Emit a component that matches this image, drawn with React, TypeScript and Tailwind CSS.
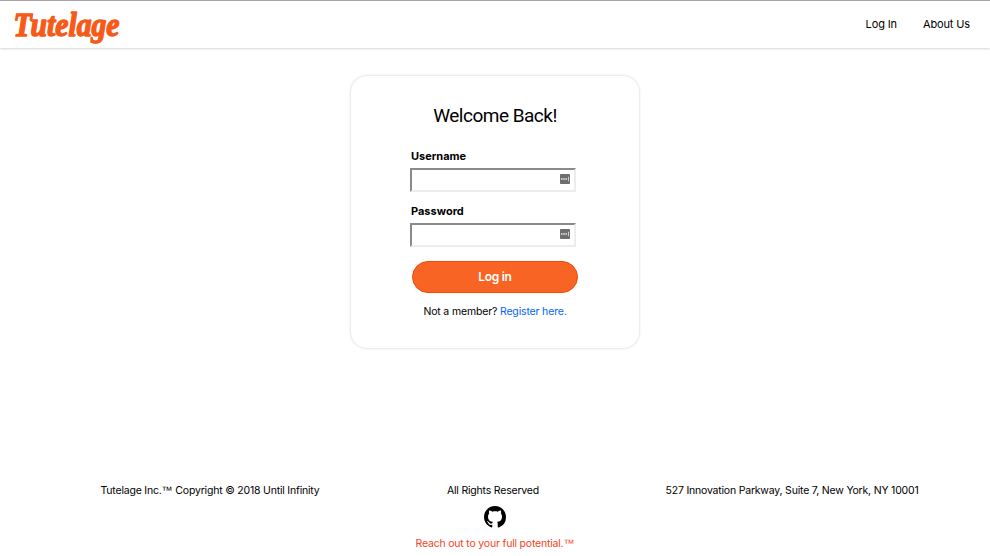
function Logo() {
  return (
    <svg className="overflow-visible" width="116" height="47" viewBox="0 0 116 47" role="img" aria-label="Tutelage">
      <text
        x="4.5"
        y="35"
        textLength="106"
        lengthAdjust="spacingAndGlyphs"
        fill="#f75a18"
        stroke="#f75a18"
        strokeWidth="1.5"
        strokeLinejoin="round"
        className="font-['Liberation_Serif',serif] text-[34px] font-bold italic"
      >
        Tutelage
      </text>
    </svg>
  );
}

function KeyIcon() {
  return (
    <svg width="10" height="10" viewBox="0 0 10 10" aria-hidden="true">
      <rect width="10" height="10" rx="0.8" fill="#6e6e6e" />
      <path d="M1 4.3h1.5v1.5H1zM3.2 4.3h1.5v1.5H3.2zM5.4 4.3h1.5v1.5H5.4z" fill="#ececec" />
      <path d="M8.5 2.8v4.4" stroke="#cfcfcf" strokeWidth="1" />
    </svg>
  );
}

function Field({ label, type }: { label: string; type: string }) {
  return (
    <label className="block h-[55px] w-[166px]">
      <span className="block h-[19px] pl-px text-[11px] leading-[14px] font-bold">{label}</span>
      <span className="flex h-6 w-[166px] items-start border-t-2 border-r-2 border-b-2 border-l-2 border-t-[#8a8a8a] border-r-[#ececec] border-b-[#ececec] border-l-[#8a8a8a] bg-white pr-[4px]">
        <input type={type} className="h-5 min-w-0 flex-1 bg-transparent outline-none" />
        <span className="mt-[3.5px]">
          <KeyIcon />
        </span>
      </span>
    </label>
  );
}

function Tm() {
  return <span className="font-['Liberation_Sans',sans-serif] text-[11px] leading-none tracking-normal">™</span>;
}

export default function App() {
  return (
    <div className="flex h-[556px] w-[990px] flex-col overflow-hidden bg-white font-[Inter,sans-serif] text-black">
      <header className="flex h-12 shrink-0 items-start justify-between border-t border-[#a5a5a5] pr-5 pl-[9px] shadow-[0_1px_2px_rgba(0,0,0,0.17)]">
        <Logo />
        <nav className="flex gap-[26px] pt-4 text-[11px] leading-[14px] tracking-[-0.13px]">
          <a className="whitespace-nowrap">Log In</a>
          <a className="whitespace-nowrap">About Us</a>
        </nav>
      </header>

      <main className="flex flex-1 justify-center pt-7">
        <section className="flex h-[272px] w-[288px] flex-col items-center rounded-[16px] pt-[27px] shadow-[0_0_3px_rgba(0,0,0,0.2)]">
          <h1 className="h-[46px] font-[Roboto,sans-serif] text-[19px] leading-[26px] tracking-[-0.5px]">Welcome Back!</h1>
          <form className="flex w-[170px] flex-col">
            <Field label="Username" type="text" />
            <Field label="Password" type="password" />
            <button
              type="button"
              className="mt-[2px] ml-[2px] h-8 w-[166px] rounded-full border border-[#f5480c] bg-[#f76423] text-[12px] font-semibold tracking-[-0.3px] text-white"
            >
              Log in
            </button>
          </form>
          <p className="mt-3 text-[10.5px] leading-[14px] tracking-[-0.16px] whitespace-nowrap">
            Not a member? <a className="text-[#0366f5]">Register here.</a>
          </p>
        </section>
      </main>

      <footer className="flex h-[72px] shrink-0 pl-[71px] text-[10.5px] leading-[14px] tracking-[-0.2px] whitespace-nowrap">
        <p className="h-[14px] w-[278px] text-center">
          Tutelage Inc.<Tm /> Copyright © 2018 Until Infinity
        </p>
        <div className="flex w-[288px] flex-col items-center">
          <p className="h-[14px]">All Rights Reserved</p>
          <svg className="mt-2 ml-[4px]" width="22" height="22" viewBox="0 0 16 16" aria-hidden="true">
            <path d="M8 0C3.58 0 0 3.58 0 8c0 3.54 2.29 6.53 5.47 7.59.4.07.55-.17.55-.38 0-.19-.01-.82-.01-1.49-2.01.37-2.53-.49-2.69-.94-.09-.23-.48-.94-.82-1.13-.28-.15-.68-.52-.01-.53.63-.01 1.08.58 1.23.82.72 1.21 1.87.87 2.33.66.07-.52.28-.87.51-1.07-1.78-.2-3.64-.89-3.64-3.95 0-.87.31-1.59.82-2.15-.08-.2-.36-1.02.08-2.12 0 0 .67-.21 2.2.82.64-.18 1.32-.27 2-.27s1.36.09 2 .27c1.53-1.04 2.2-.82 2.2-.82.44 1.1.16 1.92.08 2.12.51.56.82 1.27.82 2.15 0 3.07-1.87 3.75-3.65 3.95.29.25.54.73.54 1.48 0 1.07-.01 1.93-.01 2.2 0 .21.15.46.55.38A8.01 8.01 0 0 0 16 8c0-4.42-3.58-8-8-8Z" />
          </svg>
          <p className="mt-[9px] ml-[4px] h-[14px] text-[#f5431d]">
            Reach out to your full potential.<Tm />
          </p>
        </div>
        <p className="w-[310px] text-center">527 Innovation Parkway, Suite 7, New York, NY 10001</p>
      </footer>
    </div>
  );
}
